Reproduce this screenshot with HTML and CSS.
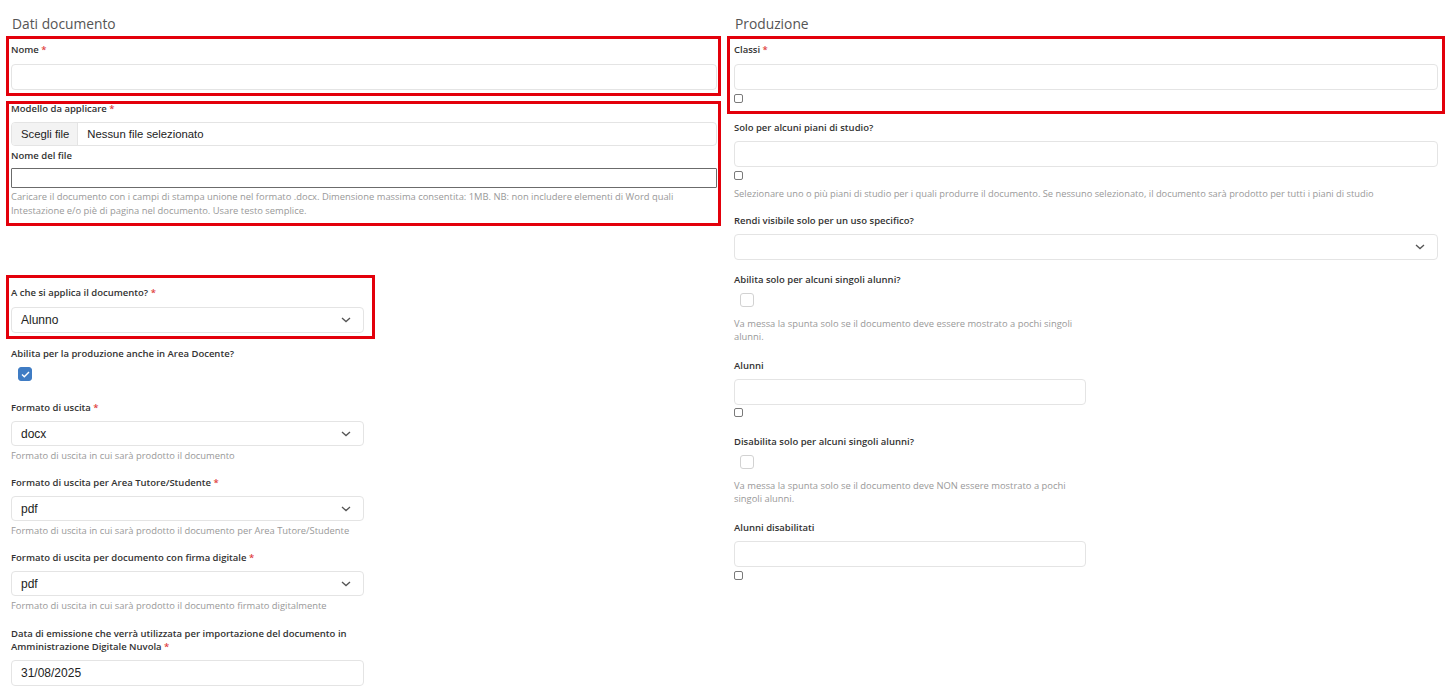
FILE: index.html
```html
<!DOCTYPE html>
<html lang="it">
<head>
  <meta charset="UTF-8">
  <title>Documento</title>
  <link rel="stylesheet" href="styles.css">
</head>
<body>

  <div class="columns">

    <!-- Colonna sinistra: dati documento -->
    <div class="col">
      <h2 class="section-title">Dati documento</h2>

      <div class="hl hl-left">
        <div class="label">Nome <span class="req">*</span></div>
        <div class="field"></div>
      </div>

      <div class="hl hl-left hl-file">
        <div class="label label-tight">Modello da applicare <span class="req">*</span></div>
        <div class="file-field">
          <span class="file-btn">Scegli file</span>
          <span class="file-name">Nessun file selezionato</span>
        </div>
        <div class="label label-file">Nome del file</div>
        <div class="plain-field"></div>
        <div class="help help-wide">Caricare il documento con i campi di stampa unione nel formato .docx. Dimensione massima consentita: 1MB. NB: non includere elementi di Word quali Intestazione e/o piè di pagina nel documento. Usare testo semplice.</div>
      </div>

      <div class="hl hl-half hl-apply">
        <div class="label">A che si applica il documento? <span class="req">*</span></div>
        <div class="field select">Alunno
          <svg width="10" height="6" viewBox="0 0 10 6"><path d="M1 1l4 3.6L9 1" fill="none" stroke="#555" stroke-width="1.3"/></svg>
        </div>
      </div>

      <div class="half">
        <div class="label mt-7">Abilita per la produzione anche in Area Docente?</div>
        <div class="check checked">
          <svg width="9" height="7" viewBox="0 0 9 7"><path d="M1 3.6l2.3 2.2L8 1" fill="none" stroke="#fff" stroke-width="1.4"/></svg>
        </div>

        <div class="label mt-19">Formato di uscita <span class="req">*</span></div>
        <div class="field select short">docx
          <svg width="10" height="6" viewBox="0 0 10 6"><path d="M1 1l4 3.6L9 1" fill="none" stroke="#555" stroke-width="1.3"/></svg>
        </div>
        <div class="help help-sel">Formato di uscita in cui sarà prodotto il documento</div>

        <div class="label mt-13">Formato di uscita per Area Tutore/Studente <span class="req">*</span></div>
        <div class="field select short">pdf
          <svg width="10" height="6" viewBox="0 0 10 6"><path d="M1 1l4 3.6L9 1" fill="none" stroke="#555" stroke-width="1.3"/></svg>
        </div>
        <div class="help help-sel">Formato di uscita in cui sarà prodotto il documento per Area Tutore/Studente</div>

        <div class="label mt-13">Formato di uscita per documento con firma digitale <span class="req">*</span></div>
        <div class="field select short">pdf
          <svg width="10" height="6" viewBox="0 0 10 6"><path d="M1 1l4 3.6L9 1" fill="none" stroke="#555" stroke-width="1.3"/></svg>
        </div>
        <div class="help help-sel">Formato di uscita in cui sarà prodotto il documento firmato digitalmente</div>

        <div class="label label-multi">Data di emissione che verrà utilizzata per importazione del documento in Amministrazione Digitale Nuvola <span class="req">*</span></div>
        <div class="field value">31/08/2025</div>
      </div>
    </div>

    <!-- Colonna destra: produzione -->
    <div class="col">
      <h2 class="section-title">Produzione</h2>

      <div class="hl hl-right">
        <div class="label">Classi <span class="req">*</span></div>
        <div class="field"></div>
        <div class="mini-check"></div>
      </div>

      <div class="label mt-6">Solo per alcuni piani di studio?</div>
      <div class="field"></div>
      <div class="mini-check"></div>
      <div class="help help-row">Selezionare uno o più piani di studio per i quali produrre il documento. Se nessuno selezionato, il documento sarà prodotto per tutti i piani di studio</div>

      <div class="label mt-13">Rendi visibile solo per un uso specifico?</div>
      <div class="field select">
        <span></span>
        <svg width="10" height="6" viewBox="0 0 10 6"><path d="M1 1l4 3.6L9 1" fill="none" stroke="#555" stroke-width="1.3"/></svg>
      </div>

      <div class="half-right">
        <div class="label mt-12">Abilita solo per alcuni singoli alunni?</div>
        <div class="check"></div>
        <div class="help help-block">Va messa la spunta solo se il documento deve essere mostrato a pochi singoli alunni.</div>

        <div class="label mt-15">Alunni</div>
        <div class="field"></div>
        <div class="mini-check mini-3"></div>

        <div class="label mt-17">Disabilita solo per alcuni singoli alunni?</div>
        <div class="check"></div>
        <div class="help help-block">Va messa la spunta solo se il documento deve NON essere mostrato a pochi singoli alunni.</div>

        <div class="label mt-15">Alunni disabilitati</div>
        <div class="field"></div>
        <div class="mini-check"></div>
      </div>
    </div>

  </div>

</body>
</html>
```

FILE: styles.css
```css
/* Impostazioni di base */
body {
  margin: 0;
  background-color: #fff;
  font-family: "Open Sans", "Noto Sans", Arial, sans-serif;
  color: #333;
}

.columns {
  display: grid;
  grid-template-columns: 706px 704px;
  column-gap: 17px;
  padding-left: 11px;
}

.section-title {
  margin: 14px 0 2px 1px;
  font-size: 13.8px;
  line-height: 20px;
  font-weight: 400;
  color: #555;
}

/* Riquadri rossi di evidenziazione */
.hl {
  border: 3px solid #e3000b;
}

.hl-left {
  margin: 0 -4px 0 -5px;
  padding: 3px 1px 3px 2px;
}

.hl-file {
  margin-top: 5px;
  padding: 0 1px 5px 2px;
}

.hl-half {
  width: 353px;
  margin-left: -5px;
  padding: 7px 8px 3px 2px;
}

.hl-apply {
  margin-top: 49px;
}

.hl-right {
  margin: 0 -7px;
  padding: 3px 4px 8px 4px;
}

/* Etichette */
.label {
  font-size: 9.5px;
  line-height: 15px;
  font-weight: 600;
  color: #333;
  margin-bottom: 7px;
}

.half .label,
.half-right .label,
.col > .label {
  margin-bottom: 6px;
}

.label-tight {
  margin-top: -3px;
  margin-bottom: 6px;
}

.label-file {
  margin-top: 2px;
  margin-bottom: 5px;
}

.half .label-multi {
  margin-top: 15px;
  margin-bottom: 7px;
  line-height: 13px;
  width: 353px;
}

.req {
  color: #e0413d;
}

.mt-6 { margin-top: 6px; }
.mt-7 { margin-top: 7px; }
.mt-12 { margin-top: 12px; }
.mt-13 { margin-top: 13px; }
.mt-15 { margin-top: 15px; }
.mt-17 { margin-top: 17px; }
.mt-19 { margin-top: 19px; }

/* Campi */
.field {
  box-sizing: border-box;
  height: 26px;
  border: 1px solid #e4e4e4;
  border-radius: 4px;
  background-color: #fff;
}

.select {
  display: flex;
  justify-content: space-between;
  align-items: center;
  padding: 0 12px 0 9px;
  font-family: "Liberation Sans", Arial, sans-serif;
  font-size: 12px;
  color: #222;
}

.select.short {
  height: 25px;
}

.value {
  display: flex;
  align-items: center;
  padding-left: 9px;
  font-family: "Liberation Sans", Arial, sans-serif;
  font-size: 12px;
  color: #222;
}

.half .field {
  width: 353px;
}

.half-right .field {
  width: 352px;
}

.file-field {
  display: flex;
  align-items: center;
  box-sizing: border-box;
  height: 24px;
  border: 1px solid #e4e4e4;
  border-radius: 4px;
  font-family: "Liberation Sans", Arial, sans-serif;
  font-size: 11.3px;
  color: #222;
  overflow: hidden;
}

.file-btn {
  display: flex;
  align-items: center;
  height: 100%;
  padding: 0 8px 0 9px;
  background-color: #f3f3f3;
  border-right: 1px solid #e4e4e4;
}

.file-name {
  padding-left: 9px;
}

.plain-field {
  box-sizing: border-box;
  height: 20px;
  border: 1px solid #6b6b6b;
  border-radius: 1px;
}

/* Testi di aiuto */
.help {
  font-size: 9.4px;
  color: #999;
}

.help-wide {
  margin-top: 2px;
  line-height: 14px;
  padding-right: 10px;
}

.help-sel {
  margin-top: 3px;
  line-height: 13px;
}

.help-row {
  margin-top: 7px;
  line-height: 13px;
  font-size: 9.3px;
}

.help-block {
  margin-top: 10px;
  width: 350px;
  line-height: 13px;
}

/* Caselle di spunta */
.check {
  box-sizing: border-box;
  width: 14px;
  height: 14px;
  margin: 0 0 0 6px;
  border: 1px solid #d2d2d2;
  border-radius: 3px;
  display: flex;
  align-items: center;
  justify-content: center;
}

.half-right .check {
  margin-top: 3px;
}

.checked {
  margin-top: 1px;
  margin-left: 7px;
  background-color: #3f7cc4;
  border-color: #3f7cc4;
}

.mini-check {
  box-sizing: border-box;
  width: 9px;
  height: 9px;
  margin-top: 4px;
  border: 1px solid #7a7a7a;
  border-radius: 2px;
}

.mini-3 {
  margin-top: 3px;
}
```
